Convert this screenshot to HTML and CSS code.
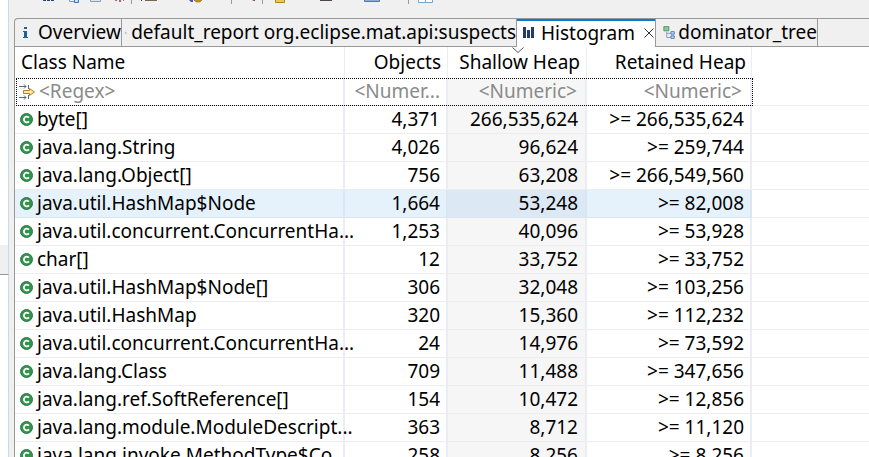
FILE: index.html
```
<!DOCTYPE html>
<html lang="en">
<head>
<meta charset="utf-8">
<title>Histogram</title>
<link rel="stylesheet" href="styles.css">
</head>
<body>
<svg class="defs" width="0" height="0">
  <symbol id="cls" viewBox="0 0 13 13"><circle cx="6.5" cy="6.5" r="6" fill="#339448" stroke="#287a50"/><path d="M8.9 4.7A2.8 2.8 0 1 0 8.9 8.3" fill="none" stroke="#fff" stroke-width="1.8"/></symbol>
</svg>
<div class="app">
  <aside class="side"><div class="side-top"></div><div class="side-tab"></div><div class="side-bottom"></div></aside>
  <main class="main">
    <svg class="toolbar" width="855" height="18" viewBox="14 0 855 18">
      <path d="M43 0h3v1h-3zM47 0h3v1h-3zM51 0h3v1h-3z" fill="#254778"/>
      <path d="M69.500 0v1.500h5" fill="none" stroke="#7997b4"/><path d="M74.500 0v2.500h4v-2.500" fill="#c8e1fc" stroke="#3475c9"/>
      <path d="M90.500 0v1.500h10v-1.500" fill="#dce6ef" stroke="#8c9dab"/>
      <path d="M115 0h2v1h-2zM119 0h2v2h-2zM123 0h1v1h-1z" fill="#a66b60"/>
      <path d="M131.500 0v4" stroke="#999"/>
      <path d="M141 0h1v1h-1z" fill="#246"/><path d="M145 0h12v1h-12z" fill="#76684e"/>
      <path d="M189 0h4v2h-2z" fill="#3659bd"/><path d="M194 0h8l-2 2h-4z" fill="#d29b31" stroke="#8b661c" stroke-width=".6"/>
      <path d="M231.500 0v4M262.500 0v4M408.500 0v4" stroke="#999"/>
      <path d="M252 0h3v1h-1z" fill="#704551"/>
      <path d="M275.500 0v2.500h9v-2.500" fill="#edc35d" stroke="#b38220"/>
      <path d="M320 0h12v1h-12z" fill="#514848"/>
      <path d="M364.500 0v1.500h15v-1.500" fill="#8baad8" stroke="#5877a6"/>
      <path d="M418.500 0v2.500h14v-2.500M425.500 0v2" fill="#fff" stroke="#7aa3c5"/>
    </svg>
    <nav class="tabs">
      <div class="tab t1"><svg class="ico" width="16" height="16" viewBox="0 0 16 16"><path d="M6 2h3v2H6zM5 6h4v6h1v1H5v-1h1V7H5z" fill="#1e609d"/></svg><span class="w-ov">Overview</span></div>
      <div class="tab t2"><svg class="ico" width="17" height="16" viewBox="0 0 17 16"><path d="M4.500 1.500h12v13h-12z" fill="#f5faf4" stroke="#9b894f"/><path d="M6 4.500h2M9 4.500h6M6 7.500h2M9 7.500h6M6 10.500h2M9 10.500h6" stroke="#3d9b70"/><path d="M.5 3.500L5.500 8 .5 12.500z" fill="#397ba8" stroke="#235475"/></svg><span class="w-def">default_report org.eclipse.mat.api:suspects</span></div>
      <div class="tab active t3"><svg class="ico" width="12" height="12" viewBox="0 0 12 12"><path d="M0 0h3v11H0zM4 3h3v8H4zM8 0h3v11H8z" fill="#243c6a"/></svg><span class="w-hist">Histogram</span><svg class="close" width="10" height="10" viewBox="0 0 10 10"><path d="M.5.5l9 9M9.500.5l-9 9" stroke="#333"/></svg></div>
      <div class="tab t4"><svg class="ico" width="16" height="17" viewBox="0 0 16 17"><path d="M4.500 8v6.500H9M4.500 9.500H9" fill="none" stroke="#7e8ba0"/><path d="M1 1.500h6v5H1z" fill="#8cc99a" stroke="#3d8a5a"/><path d="M9.500 7.500h4v3h-4zM9.500 12.500h4v3h-4z" fill="#cfe4ff" stroke="#3468b4"/></svg><span class="w-dom">dominator_tree</span></div>
      <div class="rest"></div>
    </nav>
    <section class="table" id="table">
      <div class="row head"><div class="c name"><span>Class Name</span></div><div class="c obj"><span>Objects</span></div><div class="c sh"><span>Shallow Heap</span><svg class="sort" width="12" height="7" viewBox="0 0 12 7"><path d="M.5.5L6 5.500 11.500.5" fill="none" stroke="#555"/></svg></div><div class="c ret"><span>Retained Heap</span></div><div class="c fill"></div></div>
      <div class="row filter"><div class="c name"><svg width="17" height="16" viewBox="0 0 17 16"><path d="M0 2.500h7M0 13.500h7M5 .5l2 2-2 2M5 11.500l2 2-2 2M9.500 1v4M9.500 11v4" fill="none" stroke="#50677f"/><path d="M4.500 6.500h6v-2l5 3.500-5 3.500v-2h-6z" fill="#fce9a8" stroke="#b87d1d"/></svg><span>&lt;Regex&gt;</span></div><div class="c obj"><span>&lt;Numer...</span></div><div class="c sh"><span>&lt;Numeric&gt;</span></div><div class="c ret"><span>&lt;Numeric&gt;</span></div><div class="c fill"></div></div>
    </section>
  </main>
</div>
<script src="rows.js"></script>
</body>
</html>
```
FILE: styles.css
```
* { box-sizing: border-box; }
body { margin: 0; background: #fff; color: #000; font: 19px/27px "Noto Sans", "Open Sans", sans-serif; overflow: hidden; }
.defs { position: absolute; }
.app { display: flex; width: 869px; height: 457px; overflow: hidden; }
.side { width: 14px; flex: none; background: #f0f0f0; display: flex; flex-direction: column; }
.side > div { width: 9px; border-right: 1px solid #cfd8e0; }
.side-top { height: 245px; background: #fff; }
.side-tab { height: 30px; border-bottom: 1px solid #999; }
.side-bottom { flex: 1; background: #fff; }
.main { width: 855px; background: #f0f0f0; }
.toolbar { display: block; }
.tabs { height: 29px; display: flex; border-top: 1px solid #999; border-left: 1px solid #999; border-top-left-radius: 4px; }
.tab { height: 28px; display: flex; align-items: center; border-right: 1px solid #999; border-bottom: 1px solid #999; white-space: nowrap; flex: none; }
.tab span { line-height: 27px; }
.t1 { width: 107px; padding-left: 3px; }
.t1 span { margin-left: 4px; }
.t2 { width: 395px; padding-left: 3px; }
.t2 span { margin-left: 4px; }
.t3 { width: 139px; padding-left: 6px; }
.t3 span { margin-left: 6px; }
.t4 { width: 162px; padding-left: 7px; }
.t4 span { margin-left: 2px; }
.active { background: #fff; border-bottom: 0; box-shadow: inset 0 2px #0b7ad1; }
.close { margin-left: 9px; }
.rest { flex: 1; border-bottom: 1px solid #999; }
.table { height: 410px; background: #fff; border-left: 1px solid #999; }
.row { display: flex; height: 28px; }
.c { height: 28px; display: flex; align-items: center; border-right: 2px solid #eaeef4; border-bottom: 1px solid #ededed; white-space: nowrap; flex: none; }
.obj, .sh, .ret { justify-content: flex-end; }
.name { width: 330px; padding-left: 5px; }
.name svg { flex: none; }
.name span { margin-left: 4px; }
.obj { width: 103px; padding-right: 6px; }
.sh { width: 139px; padding-right: 7px; background: #f6f6f6; }
.ret { width: 165px; padding-right: 6px; }
.fill { flex: 1; border-right: 0; }
.head { height: 31px; }
.head .c { height: 31px; background: #fff; border-bottom: 0; border-right-width: 1px; position: relative; }
.head .name span { margin-left: 1px; }
.head .sh { padding-right: 6px; }
.head .ret { padding-right: 5px; }
.sort { position: absolute; left: 64px; top: 0; }
.filter { color: #8a8a8a; position: relative; }
.filter .name { padding-left: 4px; }
.filter .name span { margin-left: 3px; }
.filter .sh, .filter .ret { padding-right: 8px; }
.filter::after { content: ""; position: absolute; left: 1px; top: 0; width: 735px; height: 26px; border: 1px dotted #000; }
.hover .c { background: #e5f2fc; border-color: #d9e7f4; }
.hover .sh { background: #dce9f4; }
.hover .fill { background: #fff; border-color: #ededed; }
```
FILE: rows.js
```
const rows = [
  ["byte[]", "4,371", "266,535,624", "266,535,624"],
  ["java.lang.String", "4,026", "96,624", "259,744"],
  ["java.lang.Object[]", "756", "63,208", "266,549,560"],
  ["java.util.HashMap$Node", "1,664", "53,248", "82,008"],
  ["java.util.concurrent.ConcurrentHa...", "1,253", "40,096", "53,928"],
  ["char[]", "12", "33,752", "33,752"],
  ["java.util.HashMap$Node[]", "306", "32,048", "103,256"],
  ["java.util.HashMap", "320", "15,360", "112,232"],
  ["java.util.concurrent.ConcurrentHa...", "24", "14,976", "73,592"],
  ["java.lang.Class", "709", "11,488", "347,656"],
  ["java.lang.ref.SoftReference[]", "154", "10,472", "12,856"],
  ["java.lang.module.ModuleDescript...", "363", "8,712", "11,120"],
  ["java.lang.invoke.MethodType$Co...", "258", "8,256", "8,256"]
];
document.getElementById("table").insertAdjacentHTML("beforeend", rows.map((r, i) =>
  `<div class="row${i === 3 ? " hover" : ""}"><div class="c name"><svg width="13" height="13"><use href="#cls"/></svg><span>${r[0]}</span></div><div class="c obj"><span>${r[1]}</span></div><div class="c sh"><span>${r[2]}</span></div><div class="c ret"><span>&gt;= ${r[3]}</span></div><div class="c fill"></div></div>`
).join(""));
```
